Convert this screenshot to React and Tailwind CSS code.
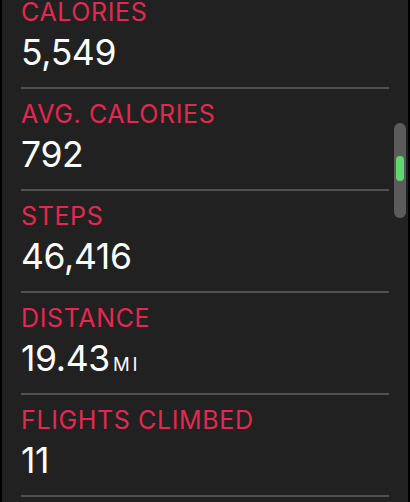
import React from 'react';

const stats = [
  { label: 'CALORIES', value: '5,549' },
  { label: 'AVG. CALORIES', value: '792' },
  { label: 'STEPS', value: '46,416' },
  { label: 'DISTANCE', value: '19.43', unit: 'MI' },
  { label: 'FLIGHTS CLIMBED', value: '11' },
];

function StatRow({ label, value, unit }) {
  return (
    <div className="flex flex-col">
      <div className="flex flex-col pt-[13px] pb-[16px] pl-[19px] pr-[20px]">
        <div className="text-[25px] leading-[25px] tracking-[0.025em] text-[#e4284f]">{label}</div>
        <div className="mt-[10px] h-[36px] overflow-visible text-[35.5px] leading-[36px] tracking-[-0.01em] text-white">
          {value}
          {unit && <span className="ml-[3px] text-[18.5px] leading-none tracking-[0.16em]">{unit}</span>}
        </div>
      </div>
      <div className="mx-[19px] h-[2px] bg-[#515151]" />
    </div>
  );
}

export default function App() {
  return (
    <div className="h-[502px] w-[410px] overflow-hidden bg-black" style={{ fontFamily: 'Inter, "Noto Sans", sans-serif' }}>
      <div className="relative mx-[2px] h-full overflow-hidden bg-[#212121]">
        <div className="-mt-[13px] flex flex-col">
          {stats.map((s) => (
            <StatRow key={s.label} {...s} />
          ))}
        </div>

        {/* scroll indicator */}
        <div className="absolute left-[392px] top-[123px] flex h-[95px] w-[12px] items-start justify-center rounded-full bg-[#5b5b5b]">
          <div className="mt-[33px] h-[25px] w-[8px] rounded-full bg-[#5fd86f]" />
        </div>
      </div>
    </div>
  );
}
